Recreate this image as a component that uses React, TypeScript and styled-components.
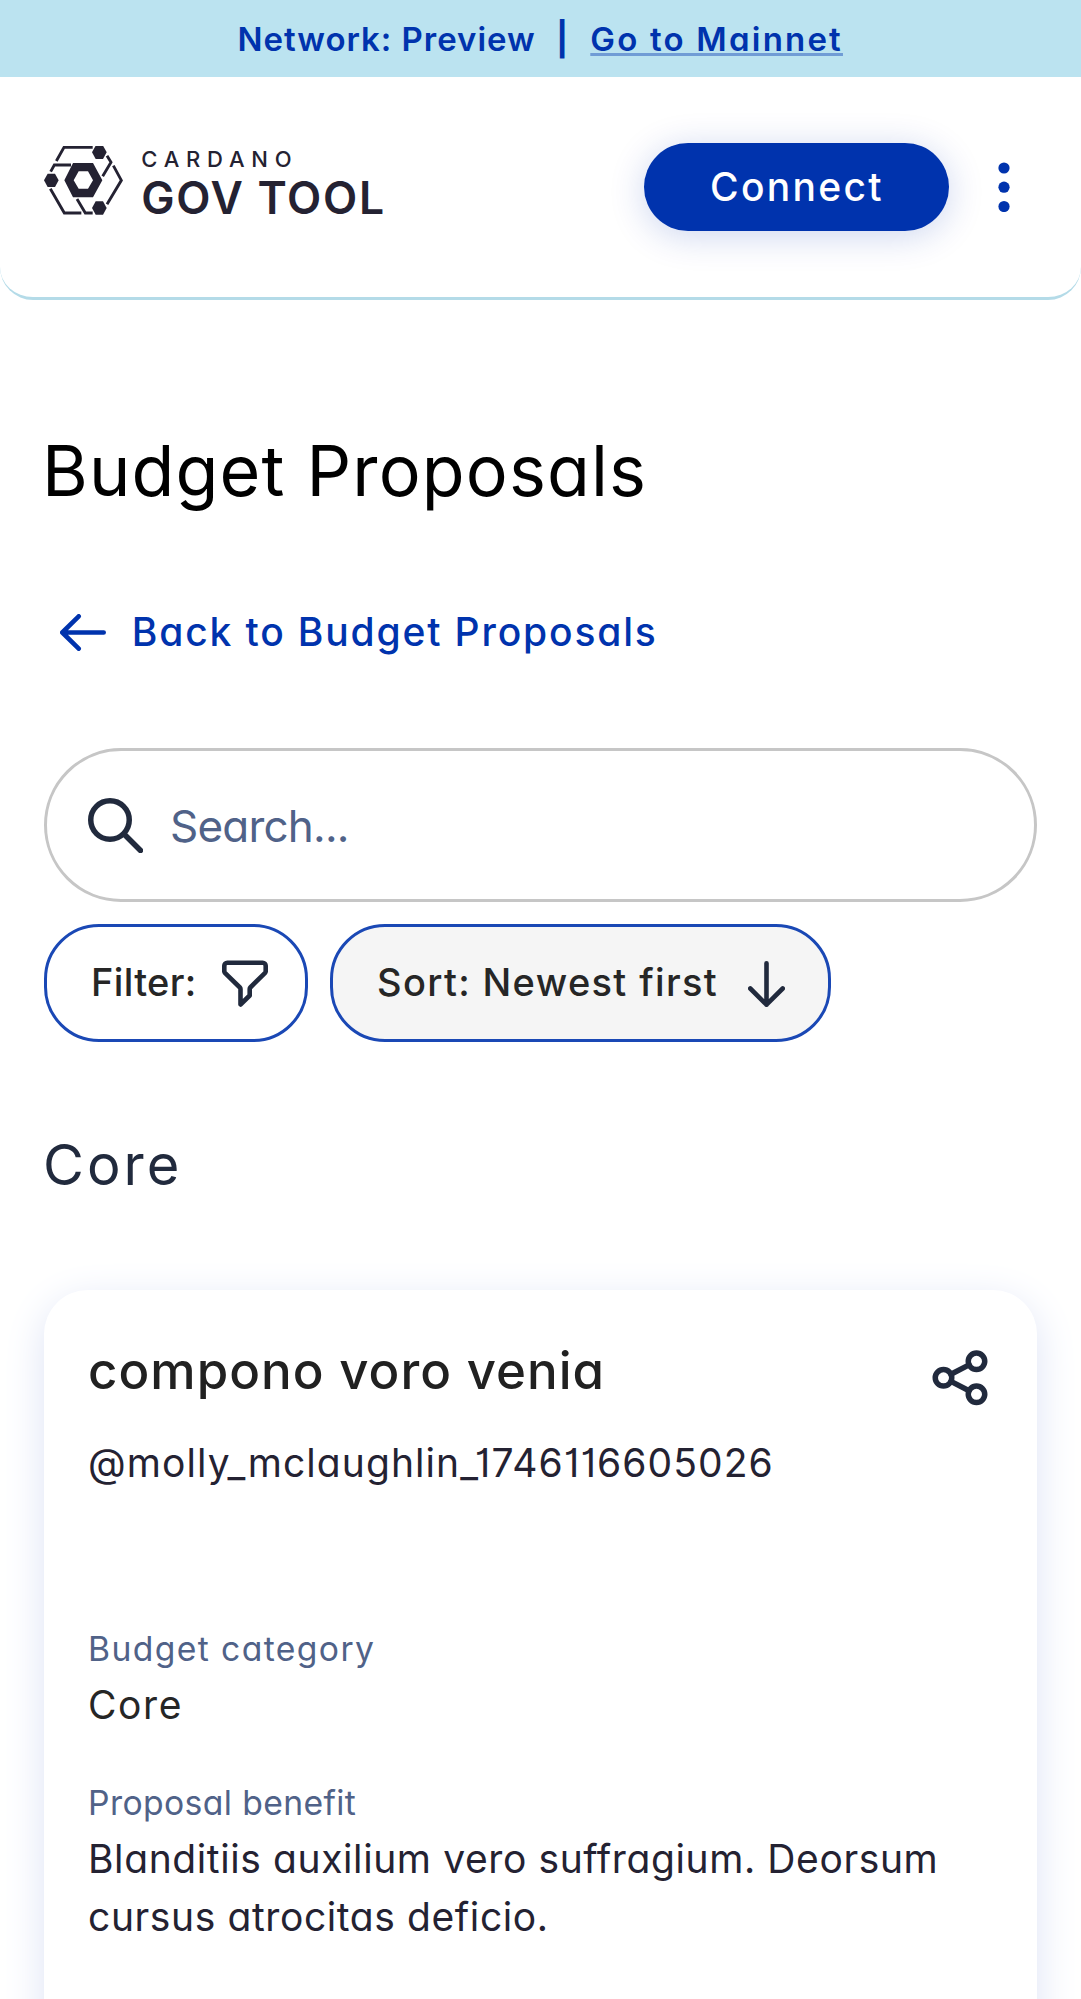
import React from 'react';
import styled, { createGlobalStyle } from 'styled-components';

const color = {
  primary: '#0033ad',
  ink: '#242232',
  navy: '#212a3d',
  text: '#262626',
  muted: '#506288',
  banner: '#bbe3f0',
};

const GlobalStyle = createGlobalStyle`
  *, *::before, *::after { box-sizing: border-box; }
  body {
    margin: 0;
    background: #fff;
    font-family: Inter, 'Open Sans', sans-serif;
    font-feature-settings: 'cv11', 'cv01';
    overflow: hidden;
  }
  h1, h2, h3, p { margin: 0; font-weight: 400; }
  button, input { font: inherit; font-feature-settings: inherit; }
`;

const Page = styled.div`
  height: 1999px;
  overflow: hidden;
  background: #fff;
`;

const Banner = styled.div`
  display: flex;
  align-items: center;
  height: 77px;
  padding-left: 237.5px;
  background: ${color.banner};
  color: ${color.primary};
  font-size: 33px;
  font-weight: 600;
  line-height: 40px;
  white-space: pre;
`;

const NetworkName = styled.span`
  width: 318.5px;
  letter-spacing: 0.97px;
`;

const Separator = styled.span`
  width: 34.3px;
  font-weight: 700;
`;

const MainnetLink = styled.a`
  letter-spacing: 2.2px;
  text-decoration: underline 3px rgba(0, 51, 173, 0.4);
  text-underline-offset: 2px;
  text-decoration-skip-ink: none;
`;

const Header = styled.header`
  display: flex;
  align-items: flex-start;
  height: 222.5px;
  padding: 65.7px 71px 0 44px;
  border-bottom: 3px solid #b4dbe8;
  border-radius: 0 0 33px 33px;
`;

const Logo = styled.div`
  display: flex;
  gap: 18.5px;
  margin: 3.3px auto 0 0;
  color: ${color.ink};
`;

const LogoText = styled.div`
  display: flex;
  flex-direction: column;
  white-space: nowrap;
`;

const LogoTop = styled.span`
  font-size: 22px;
  font-weight: 500;
  line-height: 27.6px;
  letter-spacing: 6.8px;
`;

const LogoBottom = styled.span`
  font-size: 44.5px;
  font-weight: 600;
  line-height: 48.4px;
  letter-spacing: 1.7px;
`;

const ConnectButton = styled.button`
  width: 305px;
  height: 88px;
  padding: 0 0 0 1px;
  border: 0;
  border-radius: 44px;
  background: ${color.primary};
  color: #fff;
  font-size: 39px;
  font-weight: 500;
  letter-spacing: 2.3px;
  box-shadow: 0 5px 36px rgba(0, 51, 173, 0.2);
`;

const MenuButton = styled.button`
  display: flex;
  align-items: center;
  height: 88px;
  margin-left: 49px;
  padding: 0;
  border: 0;
  background: none;
  color: ${color.primary};
`;

const Main = styled.main`
  display: flex;
  flex-direction: column;
  padding: 0 44px;
`;

const Title = styled.h1`
  margin-top: 131px;
  color: #000;
  font-size: 70px;
  line-height: 80px;
  letter-spacing: 1.15px;
  text-indent: -2px;
`;

const BackLink = styled.a`
  display: flex;
  align-items: center;
  gap: 26px;
  height: 66px;
  margin-top: 89px;
  padding-left: 15.8px;
  color: ${color.primary};
  font-size: 39px;
  font-weight: 500;
  line-height: 48px;
  letter-spacing: 1.84px;
`;

const BackLabel = styled.span`
  padding-bottom: 2px;
`;

const SearchBox = styled.label`
  display: flex;
  align-items: center;
  gap: 27px;
  height: 154px;
  margin-top: 82.5px;
  padding: 0 41px;
  border: 3px solid #c6c6c6;
  border-radius: 77px;
  color: ${color.navy};
`;

const SearchInput = styled.input`
  flex: 1;
  min-width: 0;
  padding: 1px 0 0;
  border: 0;
  outline: 0;
  background: none;
  font-size: 44px;
  letter-spacing: -0.8px;
  &::placeholder { color: ${color.muted}; opacity: 1; }
`;

const Controls = styled.div`
  display: flex;
  gap: 22px;
  margin-top: 22px;
`;

const Control = styled.button<{ $width: number; $gap: number; $spacing: number; $filled?: boolean }>`
  display: flex;
  align-items: center;
  gap: ${(p) => p.$gap}px;
  width: ${(p) => p.$width}px;
  height: 118px;
  padding: 0 0 0 44px;
  border: 3px solid #1a48b5;
  border-radius: 55px;
  background: ${(p) => (p.$filled ? '#f5f5f5' : '#fff')};
  color: ${color.text};
  font-size: 38px;
  font-weight: 500;
  line-height: 46px;
  letter-spacing: ${(p) => p.$spacing}px;
  white-space: nowrap;
`;

const ControlLabel = styled.span`
  padding-bottom: 3px;
`;

const SectionTitle = styled.h2`
  margin-top: 90.4px;
  color: ${color.navy};
  font-size: 56px;
  line-height: 66px;
  letter-spacing: 3px;
  text-indent: -1px;
`;

const Card = styled.article`
  min-height: 900px;
  margin-top: 91.3px;
  padding: 54.8px 44px 44px;
  border-radius: 44px;
  background: #fff;
  box-shadow: 0 11px 41px #dde3f5;
`;

const CardHeader = styled.div`
  display: flex;
  justify-content: space-between;
  height: 66px;
`;

const CardTitle = styled.h3`
  color: #212121;
  font-size: 51px;
  font-weight: 500;
  line-height: 53px;
  letter-spacing: 1.03px;
`;

const Handle = styled.p`
  margin-top: 23.6px;
  color: ${color.ink};
  font-size: 39px;
  line-height: 57.75px;
  letter-spacing: 1.07px;
`;

const Field = styled.section<{ $offset: number }>`
  margin-top: ${(p) => p.$offset}px;
`;

const FieldLabel = styled.p<{ $spacing: number }>`
  color: ${color.muted};
  font-size: 33.7px;
  line-height: 50px;
  letter-spacing: ${(p) => p.$spacing}px;
`;

const FieldValue = styled.p<{ $spacing: number; $color: string }>`
  margin-top: 2px;
  color: ${(p) => p.$color};
  font-size: 39px;
  line-height: 57.75px;
  letter-spacing: ${(p) => p.$spacing}px;
`;

const LogoMark = () => (
  <svg width="78.7" height="68.7" viewBox="132 78 236 206" fill="none">
    <g fill="currentColor">
      <path fillRule="evenodd" d="M193 181l26-52h60l28 52-28 51h-60zM221 181l15 25h28l15-25-15-27h-28z" />
      <path d="M276 97l11-20h22l11 20-11 20h-22z" />
      <path d="M132 181l11-20h22l11 20-11 20h-22z" />
      <path d="M276 264l11-20h22l11 20-11 20h-22z" />
    </g>
    <g stroke="currentColor" strokeWidth="8.5">
      <path d="M169 123l23-41h86" />
      <path d="M152 155l11-20h50" />
      <path d="M321 107l12 20-25 42" />
      <path d="M340 137l24 44-43 72" />
      <path d="M151 206l42 73h51" />
      <path d="M231 237l25 42h22" />
    </g>
  </svg>
);

const MenuIcon = () => (
  <svg width="12" height="50" viewBox="0 0 12 50" fill="currentColor">
    <circle cx="6" cy="6" r="5.6" />
    <circle cx="6" cy="25.2" r="5.6" />
    <circle cx="6" cy="44.5" r="5.6" />
  </svg>
);

const line = {
  fill: 'none',
  stroke: 'currentColor',
  strokeLinecap: 'round' as const,
  strokeLinejoin: 'round' as const,
};

const ArrowLeft = () => (
  <svg width="46" height="37" viewBox="0 0 46 37" {...line} strokeWidth="4.6">
    <path d="M43.7 18.5H2.3M18.7 2.3L2.3 18.5l16.4 16.2" />
  </svg>
);

const ArrowDown = () => (
  <svg width="37" height="48" viewBox="0 0 37 48" {...line} strokeWidth="4.6" color={color.navy}>
    <path d="M18.5 4.3v41.4M2.3 29.5l16.2 16.2 16.2-16.2" />
  </svg>
);

const SearchIcon = () => (
  <svg width="55" height="55" viewBox="0 0 55 55" {...line} strokeWidth="5.5">
    <circle cx="22" cy="22" r="19.25" />
    <path d="M36 36l16.5 16.5" />
  </svg>
);

const FilterIcon = () => (
  <svg width="46" height="48" viewBox="0 -1.5 46 48" {...line} strokeWidth="4.6" color={color.navy}>
    <path d="M2.3 5.3a3 3 0 0 1 3-3h35.4a3 3 0 0 1 3 3v5.5a2 2 0 0 1-.6 1.5L28.3 27a2 2 0 0 0-.6 1.5V35l-9.2 9V28.5a2 2 0 0 0-.6-1.5L2.9 12.3a2 2 0 0 1-.6-1.5z" />
  </svg>
);

const ShareIcon = () => (
  <svg width="66" height="66" viewBox="0 -.3 24 24" {...line} strokeWidth="2" color={color.navy}>
    <circle cx="18" cy="6" r="3" />
    <circle cx="6" cy="12" r="3" />
    <circle cx="18" cy="18" r="3" />
    <path d="M8.7 10.7l6.6-3.4M8.7 13.3l6.6 3.4" />
  </svg>
);

export default function App() {
  return (
    <Page>
      <GlobalStyle />
      <Banner>
        <NetworkName>Network: Preview</NetworkName>
        <Separator>|</Separator>
        <MainnetLink>Go to Mainnet</MainnetLink>
      </Banner>
      <Header>
        <Logo>
          <LogoMark />
          <LogoText>
            <LogoTop>CARDANO</LogoTop>
            <LogoBottom>GOV TOOL</LogoBottom>
          </LogoText>
        </Logo>
        <ConnectButton>Connect</ConnectButton>
        <MenuButton aria-label="Menu">
          <MenuIcon />
        </MenuButton>
      </Header>
      <Main>
        <Title>Budget Proposals</Title>
        <BackLink>
          <ArrowLeft />
          <BackLabel>Back to Budget Proposals</BackLabel>
        </BackLink>
        <SearchBox>
          <SearchIcon />
          <SearchInput placeholder="Search..." />
        </SearchBox>
        <Controls>
          <Control $width={264} $gap={25.7} $spacing={0.35}>
            <ControlLabel>Filter:</ControlLabel>
            <FilterIcon />
          </Control>
          <Control $width={500.5} $gap={30} $spacing={1.35} $filled>
            <ControlLabel>Sort: Newest first</ControlLabel>
            <ArrowDown />
          </Control>
        </Controls>
        <SectionTitle>Core</SectionTitle>
        <Card>
          <CardHeader>
            <CardTitle>compono voro venia</CardTitle>
            <ShareIcon />
          </CardHeader>
          <Handle>@molly_mclaughlin_1746116605026</Handle>
          <Field $offset={132.3}>
            <FieldLabel $spacing={1.38}>Budget category</FieldLabel>
            <FieldValue $spacing={1.6} $color={color.text}>Core</FieldValue>
          </Field>
          <Field $offset={44.3}>
            <FieldLabel $spacing={0.38}>Proposal benefit</FieldLabel>
            <FieldValue $spacing={0.6} $color={color.ink}>
              Blanditiis auxilium vero suffragium. Deorsum cursus atrocitas deficio.
            </FieldValue>
          </Field>
        </Card>
      </Main>
    </Page>
  );
}
